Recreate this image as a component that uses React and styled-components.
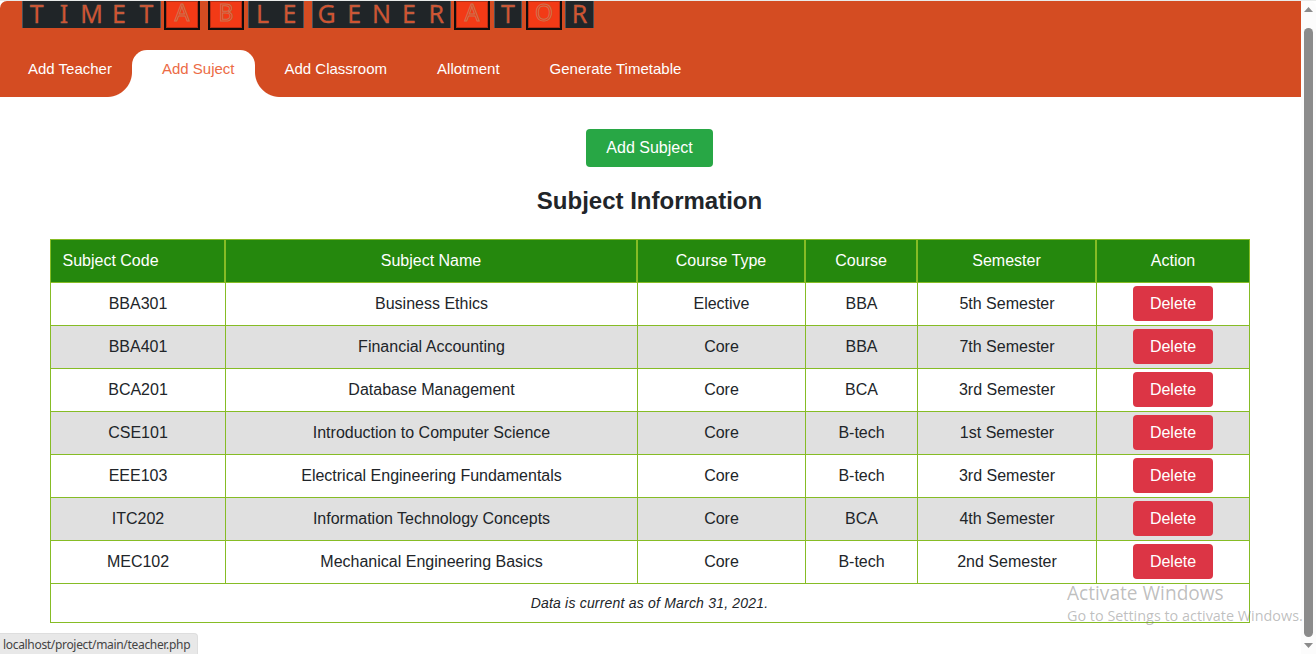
import React from "react";
import styled, { createGlobalStyle, css } from "styled-components";

const GlobalStyle = createGlobalStyle`
  *, *::before, *::after { box-sizing: border-box; }
  html, body { margin: 0; height: 100%; overflow: hidden; }
  body { font-family: "Liberation Sans", Arial, sans-serif; font-size: 16px; color: #212529; background: #fff; }
`;

const Window = styled.div`
  position: relative;
  display: flex;
  width: 1316px;
  height: 654px;
  border-top: 1px solid #e9ebea;
  overflow: hidden;
`;

const Page = styled.div`
  width: 1301px;
  display: flex;
  flex-direction: column;
`;

const Header = styled.header`
  height: 96px;
  background: #d44c22;
  border-top-left-radius: 7px;
  display: flex;
  flex-direction: column;
  justify-content: space-between;
`;

const Logo = styled.div`
  display: flex;
  align-items: flex-start;
  padding-left: 22px;
  height: 29px;
  font-family: "Noto Sans", sans-serif;
  font-size: 25px;
  line-height: 25px;
`;

const TileGroup = styled.div`
  display: flex;
  width: ${(p) => p.$width}px;
  height: 27px;
  margin-right: ${(p) => p.$gap}px;
  background: #202528;
  border-left: 1px solid #4a5157;
  border-right: 1px solid #4a5157;
  color: #d4502b;
  -webkit-text-stroke: 0.3px #a8705f;
`;

const TileLetter = styled.span`
  flex: 1;
  text-align: center;
`;

const AccentTile = styled.div`
  width: 36px;
  height: 29px;
  margin-right: ${(p) => p.$gap}px;
  border: 2px solid #120c0c;
  border-top: 0;
  background: #f23a16;
  box-shadow: inset 0 0 0 1px #b82d14;
  text-align: center;
  font-size: 23px;
  line-height: 22px;
  color: #f23a16;
  -webkit-text-stroke: 1px #cc7450;
`;

const Nav = styled.nav`
  display: flex;
  height: 47px;
  margin-left: -2px;
`;

const flare = css`
  content: "";
  position: absolute;
  bottom: 0;
  width: 25px;
  height: 25px;
`;

const Tab = styled.a`
  position: relative;
  padding: 0 20px 0 30px;
  font-size: 15px;
  line-height: 38px;
  white-space: nowrap;
  color: ${(p) => (p.$active ? "#ec6b45" : "#fff")};
  ${(p) =>
    p.$active &&
    css`
      background: #fff;
      border-radius: 15px 15px 0 0;
      &::before {
        ${flare}
        right: 100%;
        background: radial-gradient(circle at 0 0, transparent 24.5px, #fff 25.5px);
      }
      &::after {
        ${flare}
        left: 100%;
        background: radial-gradient(circle at 100% 0, transparent 24.5px, #fff 25.5px);
      }
    `}
`;

const Main = styled.main`
  display: flex;
  flex-direction: column;
  align-items: center;
  padding: 32px 52px 0 50px;
`;

const AddButton = styled.button`
  width: 127px;
  height: 38px;
  padding: 0;
  border: 0;
  border-radius: 4px;
  background: #28a745;
  color: #fff;
  font: 16px/36px "Liberation Sans", Arial, sans-serif;
`;

const Title = styled.h2`
  margin: 18px 0 22px;
  font-size: 24px;
  line-height: 32px;
`;

const Table = styled.div`
  flex: none;
  align-self: flex-start;
  width: 1200px;
  border: 1px solid #86bc25;
`;

const Row = styled.div`
  display: grid;
  grid-template-columns: 175px 412px 168px 112px 179px 152px;
  height: 43px;
  border-bottom: 1px solid #86bc25;
  background: ${(p) => (p.$shaded ? "#e0e0e0" : "#fff")};
`;

const HeadRow = styled(Row)`
  background: #25880d;
  color: #fff;
`;

const Cell = styled.div`
  display: flex;
  align-items: center;
  justify-content: center;
  padding-bottom: 1px;
  border-right: 1px solid #86bc25;
  &:last-child { border-right: 0; }
`;

const HeadCell = styled(Cell)`
  border-right-width: 2px;
  &:first-child { justify-content: flex-start; padding-left: 11.5px; }
`;

const DeleteButton = styled.button`
  width: 80px;
  height: 35px;
  padding: 0;
  border: 0;
  border-radius: 4px;
  background: #dc3545;
  color: #fff;
  font: 16px/35px "Liberation Sans", Arial, sans-serif;
`;

const ActionCell = styled(Cell)`
  align-items: flex-start;
  padding: 3px 0 0;
`;

const Footnote = styled.div`
  height: 38px;
  line-height: 38px;
  padding-right: 1px;
  text-align: center;
  font-size: 14px;
  font-style: italic;
  letter-spacing: 0.2px;
`;

const Scrollbar = styled.div`
  width: 15px;
  display: flex;
  flex-direction: column;
  align-items: center;
  padding-top: 6px;
  background: #fcfcfc;
  border-top-right-radius: 7px;
`;

const Thumb = styled.div`
  width: 9px;
  height: 609px;
  margin: 16px 0 6px;
  border-radius: 5px;
  background: #8b8b8b;
`;

const Arrow = styled.svg`
  display: block;
  width: 9px;
  height: 5px;
  fill: #8b8b8b;
`;

const StatusBar = styled.div`
  position: absolute;
  left: 0;
  bottom: 0;
  width: 198px;
  height: 21px;
  padding-left: 3px;
  border: 1px solid #dedede;
  border-width: 1px 1px 0 0;
  border-top-right-radius: 4px;
  background: #e8e8e8;
  color: #444;
  font: 12px/22px "Noto Sans", sans-serif;
  letter-spacing: -0.32px;
  white-space: nowrap;
`;

const Watermark = styled.div`
  position: absolute;
  left: 1067px;
  top: 580px;
  color: rgba(120, 120, 120, 0.48);
  font-family: "Open Sans", sans-serif;
  white-space: nowrap;
`;

const WatermarkTitle = styled.div`
  font-size: 19.1px;
  line-height: 25px;
`;

const WatermarkText = styled.div`
  font-size: 14.4px;
  line-height: 20px;
`;

const logo = [
  { text: "TIMET", width: 139, gap: 3 },
  { text: "A", accent: true, gap: 8 },
  { text: "B", accent: true, gap: 4 },
  { text: "LE", width: 56, gap: 8 },
  { text: "GENER", width: 139, gap: 3 },
  { text: "A", accent: true, gap: 4 },
  { text: "T", width: 28, gap: 4 },
  { text: "O", accent: true, gap: 3 },
  { text: "R", width: 29, gap: 0 },
];

const tabs = ["Add Teacher", "Add Suject", "Add Classroom", "Allotment", "Generate Timetable"];

const columns = ["Subject Code", "Subject Name", "Course Type", "Course", "Semester", "Action"];

const subjects = [
  ["BBA301", "Business Ethics", "Elective", "BBA", "5th Semester"],
  ["BBA401", "Financial Accounting", "Core", "BBA", "7th Semester"],
  ["BCA201", "Database Management", "Core", "BCA", "3rd Semester"],
  ["CSE101", "Introduction to Computer Science", "Core", "B-tech", "1st Semester"],
  ["EEE103", "Electrical Engineering Fundamentals", "Core", "B-tech", "3rd Semester"],
  ["ITC202", "Information Technology Concepts", "Core", "BCA", "4th Semester"],
  ["MEC102", "Mechanical Engineering Basics", "Core", "B-tech", "2nd Semester"],
];

export default function App() {
  return (
    <Window>
      <GlobalStyle />
      <Page>
        <Header>
          <Logo>
            {logo.map((part, i) =>
              part.accent ? (
                <AccentTile key={i} $gap={part.gap}>{part.text}</AccentTile>
              ) : (
                <TileGroup key={i} $width={part.width} $gap={part.gap}>
                  {part.text.split("").map((letter, j) => (
                    <TileLetter key={j}>{letter}</TileLetter>
                  ))}
                </TileGroup>
              )
            )}
          </Logo>
          <Nav>
            {tabs.map((tab) => (
              <Tab key={tab} $active={tab === "Add Suject"}>{tab}</Tab>
            ))}
          </Nav>
        </Header>
        <Main>
          <AddButton>Add Subject</AddButton>
          <Title>Subject Information</Title>
          <Table>
            <HeadRow>
              {columns.map((name) => (
                <HeadCell key={name}>{name}</HeadCell>
              ))}
            </HeadRow>
            {subjects.map((subject, i) => (
              <Row key={subject[0]} $shaded={i % 2 === 1}>
                {subject.map((value, j) => (
                  <Cell key={j}>{value}</Cell>
                ))}
                <ActionCell>
                  <DeleteButton>Delete</DeleteButton>
                </ActionCell>
              </Row>
            ))}
            <Footnote>Data is current as of March 31, 2021.</Footnote>
          </Table>
        </Main>
      </Page>
      <Scrollbar>
        <Arrow viewBox="0 0 9 5"><path d="M4.5 0 9 5H0z" /></Arrow>
        <Thumb />
        <Arrow viewBox="0 0 9 5"><path d="M0 0h9L4.5 5z" /></Arrow>
      </Scrollbar>
      <Watermark>
        <WatermarkTitle>Activate Windows</WatermarkTitle>
        <WatermarkText>Go to Settings to activate Windows.</WatermarkText>
      </Watermark>
      <StatusBar>localhost/project/main/teacher.php</StatusBar>
    </Window>
  );
}
